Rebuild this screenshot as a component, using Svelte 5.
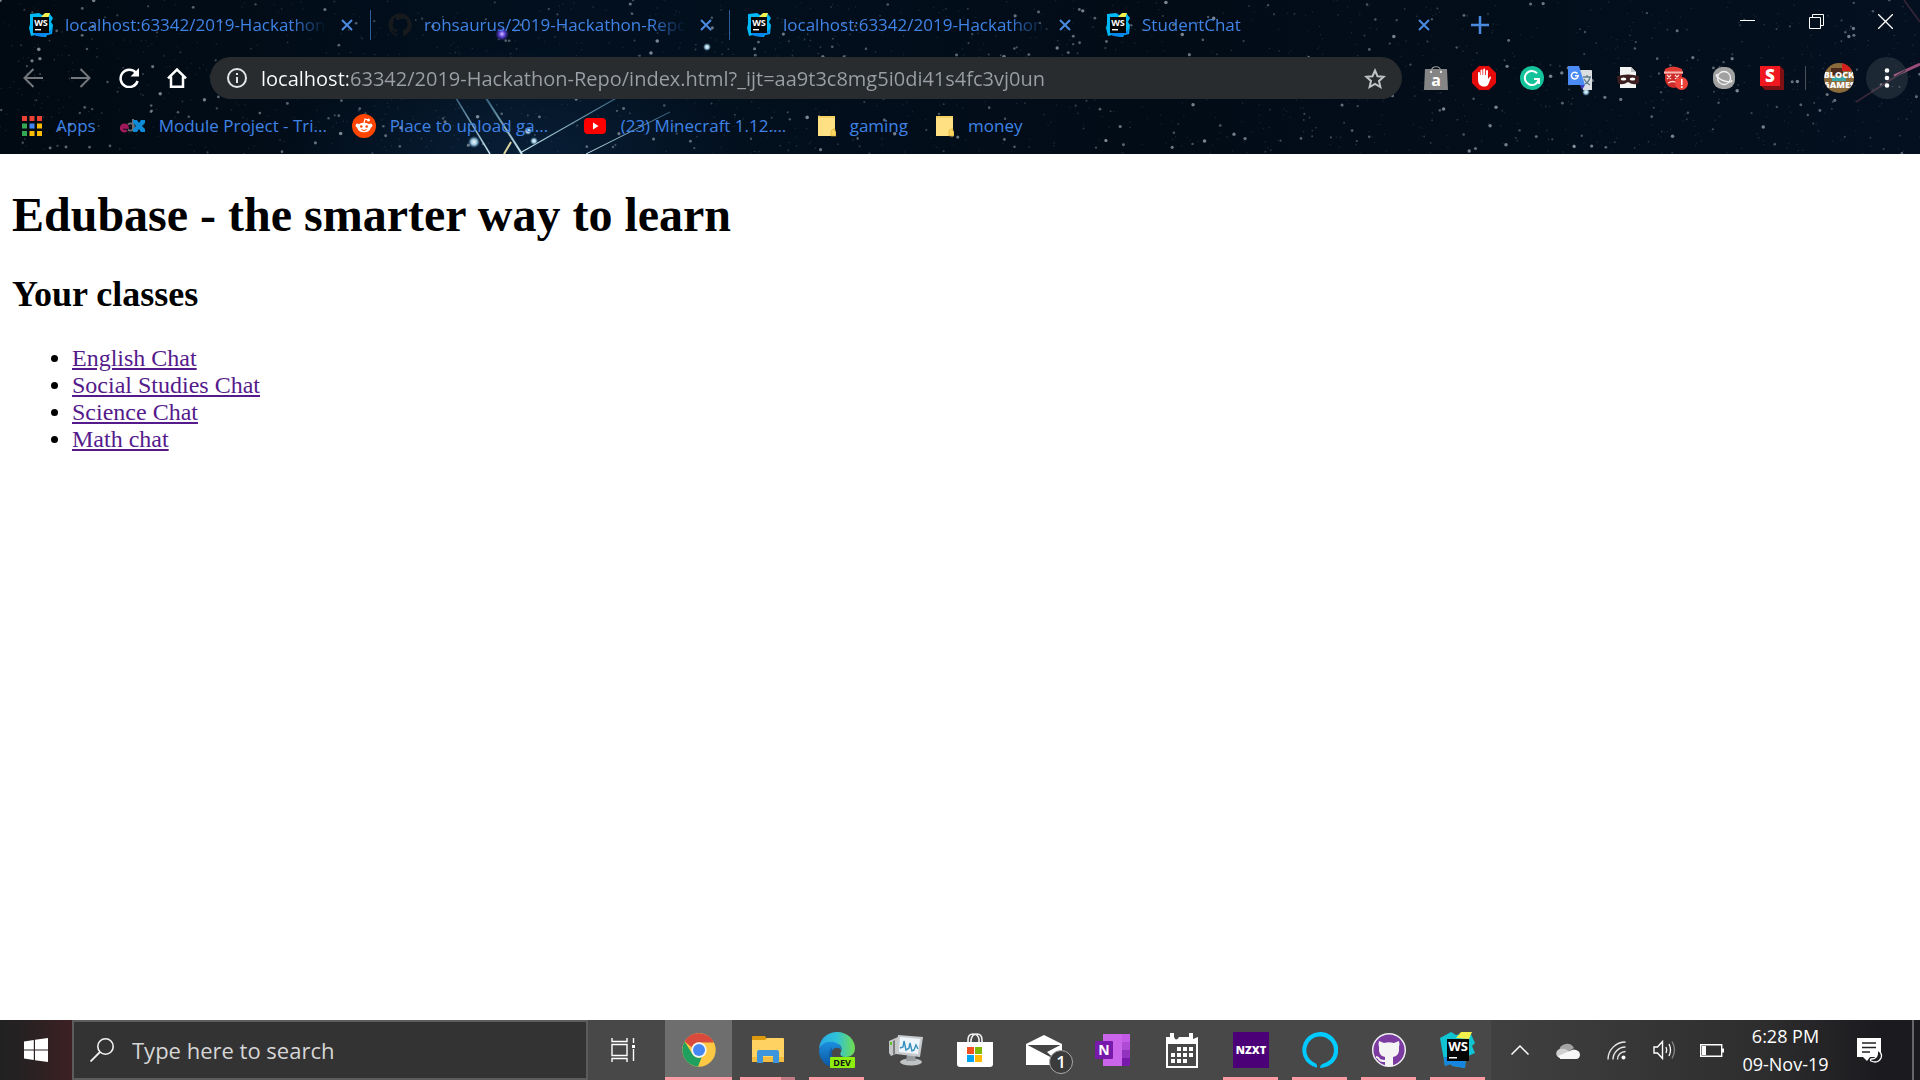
<script>
  const tabs = [
    { title: 'localhost:63342/2019-Hackathon', icon: 'ws', divider: true },
    { title: 'rohsaurus/2019-Hackathon-Repo', icon: 'octocat', divider: true },
    { title: 'localhost:63342/2019-Hackathon', icon: 'ws', divider: false },
    { title: 'StudentChat', icon: 'ws', divider: false },
  ];

  const bookmarks = [
    { label: 'Apps', icon: 'apps' },
    { label: 'Module Project - Tri...', icon: 'edx', page: true },
    { label: 'Place to upload ga...', icon: 'reddit', page: true },
    { label: '(23) Minecraft 1.12....', icon: 'youtube', page: true },
    { label: 'gaming', icon: 'folder' },
    { label: 'money', icon: 'folder' },
  ];

  const extensions = ['bag', 'adblock', 'grammarly', 'translate', 'mask', 'santa', 'planet', 'simple'];

  const classes = ['English Chat', 'Social Studies Chat', 'Science Chat', 'Math chat'];

  const apps = [
    { name: 'Google Chrome', icon: 'chrome', state: 'active' },
    { name: 'File Explorer', icon: 'explorer', state: 'stacked' },
    { name: 'Microsoft Edge Dev', icon: 'edge', state: 'open' },
    { name: 'Performance Monitor', icon: 'perfmon', state: '' },
    { name: 'Microsoft Store', icon: 'store', state: '' },
    { name: 'Mail', icon: 'mail', state: '' },
    { name: 'OneNote', icon: 'onenote', state: '' },
    { name: 'Calendar', icon: 'calendar', state: '' },
    { name: 'NZXT CAM', icon: 'nzxt', state: 'open' },
    { name: 'Alexa', icon: 'alexa', state: 'open' },
    { name: 'GitHub Desktop', icon: 'github', state: 'open' },
    { name: 'WebStorm', icon: 'webstorm', state: 'open' },
  ];

  const tray = ['chevron', 'cloud', 'wifi', 'volume', 'battery'];

  let url = $state('localhost:63342/2019-Hackathon-Repo/index.html?_ijt=aa9t3c8mg5i0di41s4fc3vj0un');
  let query = $state('');

  // fixed seed, so the sky is the same on every load
  function makeStars(count) {
    let seed = 4217;
    const next = () => {
      seed = (seed * 16807) % 2147483647;
      return seed / 2147483647;
    };
    return Array.from({ length: count }, () => {
      const x = next() * 1920;
      const y = next() * 154;
      const bright = next() ** 5;
      return { x, y, r: 0.7 + bright * 1.1, o: 0.12 + bright * 0.5 };
    });
  }
  const stars = makeStars(1700);
</script>

{#snippet wsLogo()}
  <path fill="#00b8f5" d="M1 1l9-1 3 2 7-2 4 5-2 4 2 3-1 9-5 1-1 2-8-1-3-1-4 1-2-8 1-4z" />
  <path fill="#0787ee" d="M4 17l14 3 5-4-1 5-5 1-1 2-8-1-3-1z" />
  <path fill="#f5f04a" d="M13 3l3-3h5l-2 5h-8z" />
  <path fill="#050505" d="M4 4h16v16H4z" />
  <text x="12" y="13" class="mark ws-text">WS</text>
  <path fill="#fff" d="M6 16h6v1.400H6z" />
{/snippet}

{#snippet octocat(fill)}
  <path {fill} d="M12 .5C5.700.5.500 5.700.500 12c0 5.100 3.300 9.400 7.900 10.900.600.100.800-.200.800-.600v-2c-3.200.700-3.900-1.500-3.900-1.500-.500-1.300-1.300-1.700-1.300-1.700-1-.700.100-.700.100-.700 1.200.1 1.800 1.200 1.800 1.200 1 1.800 2.700 1.300 3.400 1 .1-.800.400-1.300.700-1.600-2.600-.300-5.200-1.300-5.200-5.700 0-1.300.400-2.300 1.200-3.100-.100-.300-.500-1.500.1-3.100 0 0 1-.300 3.200 1.200a11 11 0 0 1 5.700 0c2.200-1.500 3.200-1.200 3.200-1.200.600 1.600.200 2.800.1 3.100.700.800 1.200 1.800 1.200 3.100 0 4.400-2.700 5.400-5.200 5.700.400.400.800 1.100.800 2.100v3.200c0 .300.200.700.800.600A11.500 11.500 0 0 0 12 .5z" />
{/snippet}

{#snippet glyph(name)}
  {#if name === 'ws'}
    <svg viewBox="0 0 24 24" width="24" height="24">{@render wsLogo()}</svg>
  {:else if name === 'octocat'}
    <svg viewBox="0 0 24 24" width="24" height="24">{@render octocat('#171a1d')}</svg>
  {:else if name === 'close'}
    <svg viewBox="0 0 12 12" width="12" height="12"><path d="M1 1l10 10M11 1L1 11" fill="none" stroke="#4a8be0" stroke-width="2" /></svg>
  {:else if name === 'apps'}
    <svg viewBox="0 0 20 20" width="20" height="20">
      {#each ['#ea4335', '#ea4335', '#ea4335', '#34a853', '#4285f4', '#fbbc05', '#34a853', '#fbbc05', '#fbbc05'] as fill, i}
        <rect x={(i % 3) * 7.5} y={Math.floor(i / 3) * 7.5} width="5" height="5" {fill} />
      {/each}
    </svg>
  {:else if name === 'edx'}
    <svg viewBox="7 0 25 16" width="25" height="16">
      <path d="M8 9.500h6.500a3.200 3.200 0 1 0-1 2.800" fill="none" stroke="#a3195b" stroke-width="2.600" />
      <path d="M15 6.500a3.500 3.500 0 1 1 0 5M20 1v12" fill="none" stroke="#6d6e71" stroke-width="2" />
      <path d="M20 2h4l2 3 2-3h4v3l-3 3 3 3v3h-4l-2-3-2 3h-4v-3l3-3-3-3z" fill="#0f8ad6" />
    </svg>
  {:else if name === 'reddit'}
    <svg viewBox="0 0 24 24" width="24" height="24">
      <circle cx="12" cy="12" r="12" fill="#ff4500" />
      <path d="M12 9l1-4 3 1" fill="none" stroke="#fff" stroke-width="1.200" />
      <circle cx="16.500" cy="6" r="1.500" fill="#fff" />
      <circle cx="5.500" cy="11.500" r="1.900" fill="#fff" /><circle cx="18.500" cy="11.500" r="1.900" fill="#fff" />
      <ellipse cx="12" cy="13.500" rx="6.800" ry="4.800" fill="#fff" />
      <circle cx="9.300" cy="12.500" r="1.300" fill="#ff4500" /><circle cx="14.700" cy="12.500" r="1.300" fill="#ff4500" />
      <path d="M9.300 15.600q2.700 1.800 5.400 0" fill="none" stroke="#ff4500" />
    </svg>
  {:else if name === 'youtube'}
    <svg viewBox="0 0 24 24" width="24" height="24">
      <rect x="1" y="4" width="22" height="16" rx="4" fill="#f00" /><path d="M10 8.500v7l5.500-3.500z" fill="#fff" />
    </svg>
  {:else if name === 'folder'}
    <svg viewBox="-4 0 22 22" width="22" height="22">
      <path d="M0 1h17v15l1 1v4H0z" fill="#ffe184" /><path d="M0 1h17v2H0z" fill="#f6d265" />
      <path d="M13 21v-5l2-2h2v2l1 1v4z" fill="#fbd562" stroke="#d9a82c" stroke-width=".6" />
    </svg>
  {:else if name === 'back'}
    <svg viewBox="0 0 20 20" width="20" height="20"><path d="M20 10H2M10.500 1L1.500 10l9 9" fill="none" stroke="#74787c" stroke-width="2" /></svg>
  {:else if name === 'forward'}
    <svg viewBox="0 0 20 20" width="20" height="20"><path d="M0 10h18M9.500 1l9 9-9 9" fill="none" stroke="#74787c" stroke-width="2" /></svg>
  {:else if name === 'reload'}
    <svg viewBox="0 0 20 20" width="20" height="20"><path d="M16.800 4.600A8.700 8.700 0 1 0 18.600 13" fill="none" stroke="#fff" stroke-width="2.500" /><path d="M20 0v8.500h-8.500z" fill="#fff" /></svg>
  {:else if name === 'home'}
    <svg viewBox="0 0 20 20" width="20" height="20"><path d="M1 10.300L10 1.500l9 8.800M4 8.500v10.300h12V8.500" fill="none" stroke="#fff" stroke-width="2.500" /></svg>
  {:else if name === 'info'}
    <svg viewBox="0 0 20 20" width="20" height="20"><circle cx="10" cy="10" r="9" fill="none" stroke="#e3e5e7" stroke-width="2" /><path d="M9 9h2v6H9zM9 5h2v2H9z" fill="#e3e5e7" /></svg>
  {:else if name === 'star'}
    <svg viewBox="0 0 22 21" width="22" height="21"><path d="M11 2.500l2.500 5.700 6.200.600-4.700 4.100 1.400 6.100-5.400-3.200L5.600 19 7 12.900 2.300 8.800l6.200-.6z" fill="none" stroke="#c0c3c6" stroke-width="2" /></svg>
  {:else if name === 'bag'}
    <svg viewBox="0 0 24 24" width="24" height="24">
      <path d="M1 3h22l1 21H0z" fill="#858585" />
      <path d="M7 6c0-7 10-7 10 0" fill="none" stroke="#9a9a9a" stroke-width="1.200" />
      <circle cx="7" cy="6" r="1" fill="#fff" /><circle cx="17" cy="6" r="1" fill="#fff" />
      <text x="12" y="20" class="mark bag-text">a</text>
    </svg>
  {:else if name === 'adblock'}
    <svg viewBox="0 0 24 24" width="24" height="24">
      <path d="M7 0h10l7 7v10l-7 7H7l-7-7V7z" fill="#e60b0b" />
      <path d="M7 13V7M9.500 12V4.500M12.200 12V3.600M15 12V5" stroke="#fff" stroke-width="2" stroke-linecap="round" />
      <path d="M6 9h10v4l2-2.500q1.500 0 1 1L16.500 18q-1.500 2.500-3 2.500h-3Q6 19 6 14z" fill="#fff" />
    </svg>
  {:else if name === 'grammarly'}
    <svg viewBox="0 0 24 24" width="24" height="24">
      <circle cx="12" cy="12" r="12" fill="#15c39a" />
      <path d="M17 7.200A7 7 0 1 0 18.800 13H14M19 12.500V18" fill="none" stroke="#fff" stroke-width="2" />
    </svg>
  {:else if name === 'translate'}
    <svg viewBox="0 0 24 24" width="24" height="24">
      <path d="M11 4h12a1 1 0 0 1 1 1v19H15z" fill="#dcdfe1" />
      <path d="M15 11h8M19 9v2M22 11q-1 5-5 7M16 13q2 4 6 6" fill="none" stroke="#607d8b" stroke-width="1.300" />
      <path d="M12 19h5l-3 5z" fill="#3a3fbe" />
      <path d="M0 0h11l6 19H1a1 1 0 0 1-1-1z" fill="#4b8bf5" />
      <path d="M9.500 7.500a3.400 3.400 0 1 0 .7 2.300H7" fill="none" stroke="#fff" stroke-width="1.500" />
    </svg>
  {:else if name === 'mask'}
    <svg viewBox="0 0 24 24" width="24" height="24">
      <path d="M4 1h11l5 5v16H4z" fill="#f3f3f3" /><path d="M15 1l5 5h-5z" fill="#c4c4c4" />
      <path d="M1 10q11-3 22 0v7q-5 3-11-1-6 4-10 1z" fill="#3c1e20" />
      <ellipse cx="7.500" cy="13" rx="2.800" ry="1.500" fill="#fff" /><ellipse cx="16.500" cy="13" rx="2.800" ry="1.500" fill="#fff" />
    </svg>
  {:else if name === 'santa'}
    <svg viewBox="0 0 24 24" width="24" height="24">
      <path d="M1 3q8-5 17 0l1 5H0z" fill="#e23b33" /><path d="M1 8h17v7q-2 6-8 7-8-1-9-8z" fill="#cb2c2a" />
      <path d="M0 5.500h19v2H0z" fill="#f4b9b4" />
      <path d="M3 9l4 4m0-4l-4 4M11 9l4 4m0-4l-4 4M4 17q5-3 9 0" fill="none" stroke="#ffdad7" stroke-width="1.300" />
      <circle cx="17.500" cy="17.500" r="6.500" fill="#f0443a" />
      <path d="M17 13h1.600v6H17zM17 20.300h1.600v1.600H17z" fill="#fff" />
    </svg>
  {:else if name === 'planet'}
    <svg viewBox="0 0 24 24" width="24" height="24">
      <rect x="1" y="1" width="22" height="22" rx="9" fill="#a1a1a1" />
      <circle cx="12" cy="12" r="6.500" fill="none" stroke="#f2f2f2" stroke-width="1.300" />
      <path d="M6.500 9q-3-1-1.800 1.200Q9 15 17 15.800q4 .2 2.300-2" fill="none" stroke="#f2f2f2" stroke-width="1.300" />
    </svg>
  {:else if name === 'simple'}
    <svg viewBox="0 0 24 24" width="24" height="24">
      <path d="M20 0l4 4v20H5l-5-5z" fill="#7e0f13" /><path d="M0 0h20v20H0z" fill="#f01820" />
      <text x="10" y="16" class="mark simple-text">S</text>
    </svg>
  {:else if name === 'start'}
    <svg viewBox="0 0 24 24" width="24" height="24"><path d="M0 3.400L9.800 2v9.400H0zM11 1.800L24 0v11.400H11zM0 12.600h9.800V22L0 20.600zM11 12.600h13V24l-13-1.800z" fill="#fff" /></svg>
  {:else if name === 'search'}
    <svg viewBox="0 0 24 24" width="24" height="24"><circle cx="15.500" cy="8.500" r="7.700" fill="none" stroke="#f2f2f2" stroke-width="1.600" /><path d="M10 14L.5 23.500" stroke="#f2f2f2" stroke-width="1.800" /></svg>
  {:else if name === 'taskview'}
    <svg viewBox="0 0 25 24" width="25" height="24"><path d="M1 0v3.500h15V0M1 24v-3.500h15V24M1 6.500h15v11H1zM22.500 0v5M22.500 11v12" fill="none" stroke="#fff" stroke-width="1.400" /><path d="M21 7h3v3h-3z" fill="#fff" /></svg>
  {:else if name === 'chrome'}
    <svg viewBox="0 0 34 34" width="34" height="34">
      <circle cx="17" cy="17" r="16.700" fill="#fdc843" />
      <path d="M2.600 8.600A16.700 16.700 0 0 1 31.900 9.500H17a7.600 7.600 0 0 0-7 5z" fill="#d94a3c" />
      <path d="M2.600 8.600L10.200 20.800a7.600 7.600 0 0 0 9.500 3.300L16 33.700A16.700 16.700 0 0 1 2.600 8.600z" fill="#1fa05f" />
      <circle cx="17" cy="17" r="7.700" fill="#f5f5f5" /><circle cx="17" cy="17" r="6" fill="#4688f1" />
    </svg>
  {:else if name === 'explorer'}
    <svg viewBox="0 0 34 28" width="34" height="28">
      <path d="M1 1q0-1 1-1h12l2 3v5H1z" fill="#dd9a0c" />
      <path d="M1 4h13l2-2h16q1 0 1 1v22q0 1-1 1H2q-1 0-1-1z" fill="#ffd262" />
      <path d="M1 21h32v4q0 1-1 1H2q-1 0-1-1z" fill="#f5be42" />
      <path d="M6 27V16q0-2 2-2h18q2 0 2 2v11h-6v-7H12v7z" fill="#3d96dc" />
    </svg>
  {:else if name === 'edge'}
    <svg viewBox="0 0 36 36" width="36" height="36">
      <defs>
        <linearGradient id="edge-top" x1="0" x2="1"><stop offset="0" stop-color="#25a9e8" /><stop offset=".5" stop-color="#30c2d8" /><stop offset="1" stop-color="#72dd4e" /></linearGradient>
        <linearGradient id="edge-low" y1="0" y2="1" x2="0"><stop offset="0" stop-color="#1b8fe0" /><stop offset="1" stop-color="#0b539d" /></linearGradient>
      </defs>
      <path d="M0 17C1 5 10 0 18 0c11 0 18 8 18 16 0 6-4 9-9 9-4 0-7-2-5-5 2-5-1-8-6-9C9 9 3 12 0 17z" fill="url(#edge-top)" />
      <path d="M0 18C2 12 8 9 14 10c6 1 9 5 8 8-2-3-7-3-9 1-2 5 2 12 9 13l9-2c-3 4-8 6-13 6C7 36 0 28 0 18z" fill="url(#edge-low)" />
      <path d="M13 15c-6 7-3 17 5 21 5 0 10-2 13-6l-9 1c-6-1-10-7-9-12z" fill="#12559c" opacity=".7" />
      <rect x="11" y="25" width="25" height="11" rx="1" fill="#8dee0e" />
      <text x="23" y="34" class="mark dev-text">DEV</text>
    </svg>
  {:else if name === 'perfmon'}
    <svg viewBox="0 0 34 32" width="34" height="32">
      <path d="M0 7l9-4v16l-7 3-2-3z" fill="#c4c6c7" /><path d="M1 8h2v3H1z" fill="#5fc321" /><path d="M4 7l2-1v14l-2 1z" fill="#7b7e80" />
      <ellipse cx="22" cy="28" rx="11" ry="3.500" fill="#bfc3c5" /><path d="M18 21h8l1 6H17z" fill="#989c9f" />
      <path d="M9 1l25 2-3 20L7 20z" fill="#c7cbce" /><path d="M11 3l20 2-2 15-19-2z" fill="#eef6fb" />
      <path d="M11 14l3-1 1-6 2 9 3-2 1-5 2 8 2-1 2-5 2 4" fill="none" stroke="#348fbd" stroke-width="1.400" />
    </svg>
  {:else if name === 'store'}
    <svg viewBox="0 0 36 34" width="36" height="34">
      <path d="M11 10V7q0-6 5-6t6 5v4M14 10V7q1-6 6-6t5 6v3" fill="none" stroke="#f0f0f0" stroke-width="1.600" />
      <path d="M0 9h36v22q0 3-3 3H3q-3 0-3-3z" fill="#fff" />
      <path d="M10 14h7v7h-7z" fill="#f25022" /><path d="M18 14h7v7h-7z" fill="#7fba00" /><path d="M10 22h7v7h-7z" fill="#00a4ef" /><path d="M18 22h7v7h-7z" fill="#ffb900" />
    </svg>
  {:else if name === 'mail'}
    <svg viewBox="0 0 36 30" width="36" height="30">
      <path d="M0 9L18 0l18 9v21H0z" fill="#fff" /><path d="M1.500 10h33L21 17l8 7.500z" fill="#454545" />
    </svg>
  {:else if name === 'onenote'}
    <svg viewBox="0 0 36 32" width="36" height="32">
      <path d="M8 0h27v32H8z" fill="#ca64ea" /><path d="M27 0h8v8h-8z" fill="#c35be6" /><path d="M27 8h8v8h-8z" fill="#ae4bd5" /><path d="M27 16h8v8h-8z" fill="#9332bf" /><path d="M27 24h8v8h-8z" fill="#7719aa" />
      <rect y="7" width="18" height="18" rx="1" fill="#7719aa" /><text x="9" y="21" class="mark note-text">N</text>
    </svg>
  {:else if name === 'calendar'}
    <svg viewBox="0 0 32 35" width="32" height="35">
      <path d="M0 4h4V0h4v4q2 5 5 0h10V0h4v6l5-2v31H0zm2 7v22h28V11z" fill="#fff" fill-rule="evenodd" />
      {#each [[11, 14], [17, 14], [23, 14], [5, 20], [11, 20], [17, 20], [23, 20], [5, 26], [11, 26], [17, 26]] as [x, y]}
        <rect {x} {y} width="4" height="4" fill="#fff" />
      {/each}
    </svg>
  {:else if name === 'nzxt'}
    <svg viewBox="0 0 36 36" width="36" height="36"><path d="M0 0h36v36H0z" fill="#4b0078" /><text x="18" y="22" class="mark nzxt-text">NZXT</text></svg>
  {:else if name === 'alexa'}
    <svg viewBox="0 0 36 36" width="36" height="36">
      <path d="M15 35.700A18 18 0 1 1 18 36q0-3 3-4.300a13.800 13.800 0 1 0-7.500-.5q2 1.300 1.500 4.500z" fill="#00caff" />
    </svg>
  {:else if name === 'github'}
    <svg viewBox="0 0 36 36" width="36" height="36">
      <circle cx="18" cy="18" r="16.300" fill="#7b3ba1" stroke="#eee" stroke-width="1.500" />
      <path d="M8 9l5 2q5-1.500 10 0l5-2q1 3 0 6 1 9-6 10v9h-8v-9Q7 24 8 15q-1-3 0-6z" fill="#f4f4f4" />
      <path d="M5 25q2 0 3 2t6 2" fill="none" stroke="#f4f4f4" stroke-width="2" />
    </svg>
  {:else if name === 'webstorm'}
    <svg viewBox="0 0 36 36" width="36" height="36">
      <path d="M0 6l11-6 5 3 14-3 5 11-3 3 3 7-9 4-1 11-12-2-3-2-5 2z" fill="#10c4d4" />
      <path d="M4 25l21 0v11l-12-2-3-2-5 2z" fill="#1685e0" /><path d="M16 6l5-6h11l-3 7z" fill="#f4f04b" />
      <path d="M7 7h22v22H7z" fill="#050505" /><text x="18" y="19" class="mark storm-text">WS</text><path d="M9 25h8v1.500H9z" fill="#fff" />
    </svg>
  {:else if name === 'chevron'}
    <svg viewBox="0 0 20 12" width="20" height="12"><path d="M1.500 10.500L10 2l8.500 8.500" fill="none" stroke="#fff" stroke-width="1.500" /></svg>
  {:else if name === 'cloud'}
    <svg viewBox="0 0 24 17" width="24" height="17">
      <path d="M3 9a8 8 0 0 1 15-3l-9 6z" fill="#a4a4a4" /><path d="M2 15a4.500 4.500 0 0 1 2-8q4-1 7 1l8 7z" fill="#cfcfcf" />
      <path d="M4 16q-2 0-2-2l14-6q2-1 4 0 4 1 4 5-.5 4-4 4H4z" fill="#f7f7f7" />
    </svg>
  {:else if name === 'wifi'}
    <svg viewBox="0 0 19 19" width="19" height="19">
      <g fill="none" stroke="#e8e8e8" stroke-width="1.400"><path d="M1 18.500A17.500 17.500 0 0 1 18.500 1M6 18.500A12.500 12.500 0 0 1 18.500 6M10.500 18.500a8 8 0 0 1 8-8" /></g>
      <circle cx="16.500" cy="16.500" r="2" fill="#fff" />
    </svg>
  {:else if name === 'volume'}
    <svg viewBox="0 0 23 20" width="23" height="20">
      <path d="M1 7h3.500l5-5.500v17l-5-5.500H1z" fill="none" stroke="#fff" stroke-width="1.400" />
      <path d="M13 7q1.500 3 0 6M16 4q3 6 0 12" fill="none" stroke="#fff" stroke-width="1.300" /><path d="M19 1.500q5 8.500 0 17" fill="none" stroke="#888" stroke-width="1.300" />
    </svg>
  {:else if name === 'battery'}
    <svg viewBox="0 0 24 13" width="24" height="13"><path d="M.700.700h21v11.600H.700z" fill="none" stroke="#fff" stroke-width="1.400" /><path d="M2 2h4v9H2zM22 4.500h2v4h-2z" fill="#fff" /></svg>
  {:else if name === 'notify'}
    <svg viewBox="0 0 26 25" width="26" height="25">
      <path d="M0 0h24v19H13l-3 4-4-4H0z" fill="#fff" /><path d="M5 5h14M5 9.500h14M5 14h8" stroke="#222" stroke-width="1.300" />
      <path d="M20 12q6 3 4 8-3 6-10 3-1-1 0-2 8 0 6-9z" fill="#1f1f20" stroke="#fff" stroke-width="1.300" />
    </svg>
  {/if}
{/snippet}

<div class="screen">
  <header>
    <svg class="sky" viewBox="0 0 1920 154" preserveAspectRatio="xMidYMid slice" aria-hidden="true">
      <defs>
        <linearGradient id="space"><stop offset="0" stop-color="#010a12" /><stop offset=".3" stop-color="#02101f" /><stop offset=".6" stop-color="#020c17" /><stop offset="1" stop-color="#04101f" /></linearGradient>
        <radialGradient id="glow"><stop offset="0" stop-color="#12365c" stop-opacity=".4" /><stop offset="1" stop-color="#12365c" stop-opacity="0" /></radialGradient>
        <radialGradient id="violet"><stop offset="0" stop-color="#d3c4ff" /><stop offset=".4" stop-color="#6547dd" /><stop offset="1" stop-color="#3b23a5" stop-opacity="0" /></radialGradient>
        <radialGradient id="white"><stop offset="0" stop-color="#f2fbff" /><stop offset=".5" stop-color="#9cc3dc" /><stop offset="1" stop-color="#4f88ad" stop-opacity="0" /></radialGradient>
        <linearGradient id="ray" x1="0" x2="0" y1="0" y2="1"><stop offset="0" stop-color="#36627f" /><stop offset="1" stop-color="#c5e6ee" /></linearGradient>
      </defs>
      <rect width="1920" height="154" fill="url(#space)" />
      <ellipse cx="515" cy="155" rx="230" ry="110" fill="url(#glow)" />
      {#each stars as s}
        <circle cx={s.x} cy={s.y} r={s.r} fill="#c6d3dd" opacity={s.o} />
      {/each}
      <g fill="none" stroke="url(#ray)">
        <path d="M456 98l34 56" stroke-width="1.500" /><path d="M486 98l36 56" stroke-width="2" />
        <path d="M620 96l-100 57" stroke-width="1.200" /><path d="M670 112l-84 42" stroke-width="1" />
        <path d="M511 142l-7 12" stroke="#d8d39c" stroke-width="2" />
        <path d="M1920 64l-26 12" stroke="#9a4d78" stroke-width="3" /><path d="M1906 70l-50 32M1904 0l16 22" stroke="#38283a" stroke-width="1.500" />
      </g>
      <circle cx="502" cy="34" r="7" fill="url(#violet)" />
      <circle cx="474" cy="142" r="6" fill="url(#white)" />
      <circle cx="528" cy="131" r="4" fill="url(#white)" />
      <circle cx="534" cy="141" r="4" fill="url(#white)" />
      <circle cx="707" cy="47" r="4" fill="url(#white)" />
      <circle cx="1586" cy="92" r="4" fill="url(#white)" />
    </svg>

    <div class="titlebar">
      <ul class="tabs">
        {#each tabs as tab}
          <li class="tab" class:divider={tab.divider}>
            {@render glyph(tab.icon)}
            <span class="tab-title">{tab.title}</span>
            <button class="tab-close" aria-label="Close tab">{@render glyph('close')}</button>
          </li>
        {/each}
      </ul>
      <button class="new-tab" aria-label="New tab">
        <svg viewBox="0 0 18 18" width="18" height="18"><path d="M9 0v18M0 9h18" stroke="#4a8be0" stroke-width="2.500" /></svg>
      </button>
      <div class="window-controls">
        <button aria-label="Minimize"><svg viewBox="0 0 15 15" width="15" height="15"><path d="M0 6.500h15" stroke="#fff" /></svg></button>
        <button aria-label="Restore"><svg viewBox="0 0 15 15" width="15" height="15"><path d="M.500 3.500h11v11H.500zM3.500 3.500v-3h11v11h-3" fill="none" stroke="#fff" /></svg></button>
        <button aria-label="Close"><svg viewBox="0 0 15 15" width="15" height="15"><path d="M0 0l15 15M15 0L0 15" stroke="#fff" stroke-width="1.300" /></svg></button>
      </div>
    </div>

    <div class="toolbar">
      {#each ['back', 'forward', 'reload', 'home'] as name}
        <button class="tool" aria-label={name}>{@render glyph(name)}</button>
      {/each}
      <div class="omnibox">
        {@render glyph('info')}
        <input class="url" type="text" aria-label="Address" spellcheck="false" bind:value={url} />
        <button class="bookmark-star" aria-label="Bookmark this page">{@render glyph('star')}</button>
      </div>
      <div class="extensions">
        {#each extensions as name}
          <button class="tool" aria-label="{name} extension">{@render glyph(name)}</button>
        {/each}
      </div>
      <button class="profile" aria-label="Profile">
        <svg viewBox="0 0 30 30" width="30" height="30">
          <clipPath id="round"><circle cx="15" cy="15" r="15" /></clipPath>
          <g clip-path="url(#round)">
            <path d="M0 0h30v30H0z" fill="#8b6a3c" /><path d="M7 5h12v7H7z" fill="#4b2a20" /><path d="M18 0h9v8h-9z" fill="#d51f1b" />
            <path d="M8 14h14v4H8z" fill="#39a5a7" />
            <text x="15" y="15" class="mark block-text">BLOCK</text><text x="15" y="25" class="mark block-text">GAMES</text>
          </g>
        </svg>
      </button>
      <button class="menu" aria-label="Menu">
        <svg viewBox="0 0 6 20" width="6" height="20"><circle cx="3" cy="2.500" r="2.300" fill="#fff" /><circle cx="3" cy="10" r="2.300" fill="#fff" /><circle cx="3" cy="17.500" r="2.300" fill="#fff" /></svg>
      </button>
    </div>

    <nav class="bookmarks" aria-label="Bookmarks">
      {#each bookmarks as mark}
        <a href="#bookmark" class:page={mark.page}>{@render glyph(mark.icon)}<span>{mark.label}</span></a>
      {/each}
    </nav>
  </header>

  <main>
    <h1>Edubase - the smarter way to learn</h1>
    <h2>Your classes</h2>
    <ul>
      {#each classes as name}
        <li><a href="#chat">{name}</a></li>
      {/each}
    </ul>
  </main>

  <footer>
    <button class="start" aria-label="Start">{@render glyph('start')}</button>
    <label class="search">
      {@render glyph('search')}
      <input type="text" aria-label="Search" placeholder="Type here to search" bind:value={query} />
    </label>
    <button class="task-view" aria-label="Task View">{@render glyph('taskview')}</button>
    <div class="apps">
      {#each apps as app}
        <button class="app {app.state}" aria-label={app.name}>
          {@render glyph(app.icon)}
          {#if app.icon === 'mail'}<span class="badge">1</span>{/if}
        </button>
      {/each}
    </div>
    <div class="tray">
      {#each tray as name}
        <button class="tray-icon" aria-label={name}>{@render glyph(name)}</button>
      {/each}
      <button class="clock"><span>6:28 PM</span><span>09-Nov-19</span></button>
      <button class="notify" aria-label="Notifications">{@render glyph('notify')}</button>
      <button class="show-desktop" aria-label="Show desktop"></button>
    </div>
  </footer>
</div>

<style>
  :global(body) { margin: 0; background: #fff; }

  .screen {
    min-height: 100vh;
    display: flex;
    flex-direction: column;
    font-family: "Open Sans", "Noto Sans", sans-serif;
  }

  button {
    display: flex;
    align-items: center;
    justify-content: center;
    flex-shrink: 0;
    padding: 0;
    border: 0;
    background: none;
    color: inherit;
    font: inherit;
  }
  input { font: inherit; border: 0; padding: 0; outline: 0; min-width: 0; }
  svg { display: block; flex-shrink: 0; }

  /* lettering inside icons */
  .mark { text-anchor: middle; fill: #fff; font-family: "Open Sans", sans-serif; font-weight: 700; }
  .ws-text { font-size: 9px; }
  .bag-text { font-size: 16px; }
  .simple-text { font-size: 17px; font-weight: 800; }
  .dev-text { font-size: 9px; fill: #111; }
  .note-text { font-size: 14px; }
  .nzxt-text { font-size: 11px; font-weight: 800; }
  .storm-text { font-size: 13px; }
  .block-text { font-size: 9px; font-weight: 800; }

  header { position: relative; overflow: hidden; background: #010a12; color: #3f83e6; }
  .sky { position: absolute; inset: 0; width: 100%; height: 100%; }
  .titlebar, .toolbar, .bookmarks { position: relative; display: flex; align-items: center; }

  .titlebar { height: 50px; }
  .tabs { display: flex; margin: 0; padding: 0 0 0 12px; list-style: none; }
  .tab {
    box-sizing: border-box;
    width: 359px;
    height: 30px;
    display: flex;
    align-items: center;
    gap: 12px;
    padding: 0 11px 0 17px;
    border-right: 1px solid transparent;
    font-size: 17px;
  }
  .tab.divider { border-right-color: #2d5c99; }
  .tab-title {
    flex: 1;
    padding-bottom: 2px;
    overflow: hidden;
    white-space: nowrap;
    mask-image: linear-gradient(90deg, #000 calc(100% - 36px), transparent);
  }
  .tab-close { width: 24px; height: 24px; margin-left: -4px; }
  .new-tab { width: 30px; height: 30px; margin-left: 17px; }
  .window-controls { display: flex; align-self: flex-start; margin-left: auto; }
  .window-controls button { width: 69px; height: 42px; }

  .toolbar { height: 56px; padding: 0 12px 0 9px; }
  .tool { width: 48px; height: 48px; }
  .omnibox {
    flex: 1;
    display: flex;
    align-items: center;
    gap: 14px;
    height: 42px;
    margin: 0 10px 0 9px;
    padding: 0 16px 0 17px;
    border-radius: 21px;
    background: #292c2f;
  }
  /* the host part is brighter than the path */
  .url {
    flex: 1;
    font-size: 20px;
    background: linear-gradient(90deg, #fff 87px, #9aa0a6 87px);
    background-clip: text;
    color: transparent;
  }
  .extensions { display: flex; }
  .profile { margin-left: 9px; padding-left: 18px; border-left: 1px solid #4b5056; height: 24px; }
  .menu { width: 42px; height: 42px; margin-left: 12px; border-radius: 50%; background: rgba(255, 255, 255, 0.1); }

  .bookmarks { height: 40px; padding: 0 22px 8px; gap: 24px; font-size: 17px; }
  .bookmarks a { display: flex; align-items: center; gap: 14px; color: inherit; text-decoration: none; white-space: nowrap; }
  .bookmarks .page span { min-width: 169px; }
  .bookmarks span { padding-bottom: 2px; }

  main {
    flex: 1;
    padding: 0 12px;
    color: #000;
    font-family: "Liberation Serif", "Times New Roman", serif;
    font-size: 24px;
    display: flow-root;
  }
  h1 { margin: 33px 0 32px; font-size: 48px; line-height: 55px; }
  h2 { margin: 30px 0; font-size: 36px; line-height: 41px; }
  main ul { margin: 24px 0; padding-left: 60px; line-height: 27px; }
  main a { color: #551a8b; }

  footer {
    display: flex;
    height: 60px;
    color: #fff;
    background: linear-gradient(90deg, #222122 0, #242122 1%, #3f2024 4%, #484848 30%, #484848 72%, #383838 84%, #2d2d2e 92%, #1b1b1f 98%);
  }
  .start { width: 72px; }
  .search {
    box-sizing: border-box;
    width: 516px;
    display: flex;
    align-items: center;
    gap: 18px;
    padding: 0 16px;
    border: 2px solid #5c5c5c;
    background: #333;
  }
  .search input { flex: 1; background: none; color: #fff; font-size: 22px; }
  .search input::placeholder { color: #d6d6d6; opacity: 1; }
  .task-view { width: 71px; background: #484848; }
  .apps { display: flex; gap: 2px; padding-left: 6px; background: #484848; }
  .app { position: relative; width: 67px; }
  .app.active { background: #6e6e6e; }
  .app.active::after, .app.open::after, .app.stacked::after {
    content: "";
    position: absolute;
    bottom: 0;
    left: 6px;
    right: 6px;
    height: 3px;
    background: #ff9ba5;
  }
  .app.active::after { left: 0; right: 0; }
  .app.stacked::after { background: linear-gradient(90deg, #ff9ba5 41px, #c57b83 41px); }
  .badge {
    position: absolute;
    right: 4px;
    bottom: 6px;
    width: 22px;
    height: 22px;
    border: 1px solid #aaa;
    border-radius: 50%;
    background: #3b3b3b;
    font-size: 17px;
    font-weight: 600;
    line-height: 22px;
    text-align: center;
  }

  .tray { display: flex; margin-left: auto; }
  .tray-icon { width: 48px; }
  .clock { flex-direction: column; width: 99px; font-size: 18px; line-height: 28px; }
  .notify { width: 70px; }
  .show-desktop { width: 8px; margin-left: 7px; border-left: 2px solid #66666a; }
</style>
